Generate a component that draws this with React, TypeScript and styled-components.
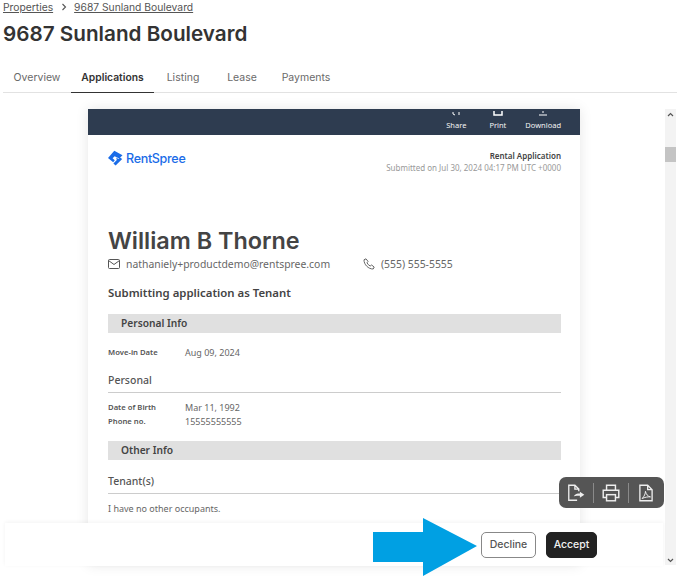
import styled, { createGlobalStyle } from 'styled-components'

const GlobalStyle = createGlobalStyle`
  html, body {
    margin: 0;
    background: #fff;
  }
  * {
    box-sizing: border-box;
  }
`

const Page = styled.div`
  position: relative;
  width: 688px;
  height: 585px;
  overflow: hidden;
  padding: 0 3px;
  font-family: Inter, sans-serif;
  color: #333;
`

const Breadcrumb = styled.nav`
  display: flex;
  align-items: center;
  gap: 7.5px;
  height: 14px;
  font-size: 10.3px;
  color: #555;
  a {
    color: inherit;
    text-decoration: underline;
  }
`

const Title = styled.h1`
  margin: 6px 0 0;
  font-size: 20.7px;
  line-height: 28px;
  font-weight: 600;
  color: #333;
`

const Tabs = styled.div`
  display: flex;
  height: 31px;
  margin-top: 14px;
  width: 674px;
  border-bottom: 1px solid #e2e2e2;
`

const Tab = styled.div<{ $active?: boolean; $width: number }>`
  width: ${p => p.$width}px;
  text-align: center;
  font-size: ${p => (p.$active ? 10.3 : 10.5)}px;
  line-height: 31px;
  height: 31px;
  font-weight: ${p => (p.$active ? 600 : 400)};
  color: ${p => (p.$active ? '#333' : '#6a6a6a')};
  border-bottom: ${p => (p.$active ? '1.5px solid #333' : 'none')};
`

const Viewer = styled.div`
  display: flex;
  height: 456px;
  margin-top: 16px;
`

const Doc = styled.div`
  width: 492px;
  margin-left: 85px;
  height: 100%;
  overflow: hidden;
  box-shadow: 0 0 12px rgba(0, 0, 0, 0.1);
  font-family: 'Noto Sans', sans-serif;
  color: #444;
`

const DocBar = styled.div`
  display: flex;
  justify-content: flex-end;
  gap: 19px;
  height: 26px;
  padding: 0 19px 0 0;
  background: #2e3c50;
`

const BarAction = styled.div<{ $after?: number }>`
  display: flex;
  flex-direction: column;
  align-items: center;
  justify-content: flex-end;
  margin-right: ${p => p.$after ?? 0}px;
  font-size: 7.5px;
  line-height: 10px;
  padding-bottom: 5px;
  color: #f4f4f4;
  svg {
    display: block;
    margin-bottom: 4px;
  }
`

const DocBody = styled.div`
  padding: 0 19px 0 20px;
`

const DocHead = styled.div`
  display: flex;
  justify-content: space-between;
  padding-top: 15px;
`

const Logo = styled.div`
  display: flex;
  align-items: center;
  gap: 3px;
  height: 16px;
  font-family: Inter, sans-serif;
  font-size: 12.5px;
  font-weight: 500;
  letter-spacing: -0.3px;
  color: #1a6ce8;
`

const Meta = styled.div`
  text-align: right;
  font-size: 8px;
  line-height: 12px;
  color: #999;
  strong {
    display: block;
    color: #444;
    font-weight: 600;
  }
`

const Name = styled.h2`
  margin: 52px 0 0;
  font-family: Inter, sans-serif;
  font-size: 23.4px;
  line-height: 30px;
  font-weight: 600;
  color: #444;
`

const Contact = styled.div`
  display: flex;
  align-items: center;
  height: 16px;
  margin-top: 0;
  font-size: 10.4px;
  color: #666;
`

const ContactItem = styled.span<{ $width?: number }>`
  display: flex;
  align-items: center;
  gap: 6px;
  width: ${p => (p.$width ? `${p.$width}px` : 'auto')};
`

const Lead = styled.div`
  margin-top: 13px;
  font-size: 11.4px;
  line-height: 16px;
  font-weight: 600;
  color: #444;
`

const Band = styled.div<{ $top: number }>`
  height: 19px;
  margin-top: ${p => p.$top}px;
  padding-left: 13px;
  background: #e0e0e0;
  font-size: 10.2px;
  line-height: 19px;
  font-weight: 600;
  color: #444;
`

const Row = styled.div<{ $top: number }>`
  display: flex;
  height: 14px;
  margin-top: ${p => p.$top}px;
  align-items: center;
`

const Label = styled.div`
  width: 77px;
  font-size: 7.7px;
  font-weight: 600;
  color: #555;
`

const Value = styled.div`
  font-size: 9px;
  color: #666;
`

const SubHead = styled.div<{ $top: number }>`
  margin-top: ${p => p.$top}px;
  padding-bottom: 4px;
  border-bottom: 1px solid #ccc;
  font-size: 10.5px;
  line-height: 15px;
  font-weight: 500;
  color: #555;
`

const Note = styled.div`
  margin-top: 8px;
  font-size: 9px;
  line-height: 14px;
  color: #666;
`

const Track = styled.div`
  position: relative;
  width: 11px;
  margin-left: 85px;
  background: #f3f3f3;
`

const Thumb = styled.div`
  position: absolute;
  top: 38px;
  left: 0;
  width: 11px;
  height: 15px;
  background: #c4c4c4;
`

const Caret = styled.svg<{ $bottom?: boolean }>`
  position: absolute;
  left: 2px;
  ${p => (p.$bottom ? 'bottom: 2px;' : 'top: 3px;')}
`

const Toolbar = styled.div`
  position: absolute;
  left: 559px;
  top: 477px;
  display: flex;
  align-items: center;
  gap: 7px;
  width: 105px;
  height: 31px;
  padding: 0 7px;
  border-radius: 7px;
  background: #555;
  svg {
    display: block;
    flex: none;
  }
`

const Divider = styled.div`
  width: 1px;
  height: 20px;
  background: #8a8a8a;
`

const Footer = styled.div`
  position: absolute;
  left: 5px;
  top: 523px;
  display: flex;
  justify-content: flex-end;
  align-items: center;
  gap: 10px;
  width: 658px;
  height: 43px;
  padding: 0 66px 0 0;
  background: #fff;
  box-shadow: 0 -1px 4px rgba(0, 0, 0, 0.05);
`

const Btn = styled.button<{ $primary?: boolean }>`
  width: ${p => (p.$primary ? 51 : 55)}px;
  height: 26px;
  padding: 0;
  border-radius: 5px;
  border: 1px solid ${p => (p.$primary ? '#222' : '#888')};
  background: ${p => (p.$primary ? '#222' : '#fff')};
  color: ${p => (p.$primary ? '#f2f2f2' : '#555')};
  font-family: Inter, sans-serif;
  font-size: 10.5px;
  font-weight: 500;
`

const Arrow = styled.svg`
  position: absolute;
  left: 373px;
  top: 518px;
`

function RentSpreeMark() {
  return (
    <svg width="15" height="16" viewBox="0 0 15 16">
      <path d="M0 8 L6.3 0.8 L14.5 5.2 L11.2 8.6 L6.6 6.2 L4.6 8.2 L6.8 10.2 L5.2 12.2 Z" fill="#1a6ce8" />
      <path d="M8.2 7.6 L10.4 8.9 L12 7.4 L14.2 9 L7.6 15.4 L5.4 13.4 L8.8 10 Z" fill="#1a6ce8" />
    </svg>
  )
}

export default function App() {
  return (
    <Page>
      <GlobalStyle />
      <Breadcrumb>
        <a href="#">Properties</a>
        <svg width="6" height="8" viewBox="0 0 6 8" fill="none" stroke="#555" strokeWidth="1.1">
          <path d="M1.5 1 L4.5 4 L1.5 7" />
        </svg>
        <a href="#">9687 Sunland Boulevard</a>
      </Breadcrumb>
      <Title>9687 Sunland Boulevard</Title>
      <Tabs>
        <Tab $width={68}>Overview</Tab>
        <Tab $width={83} $active>Applications</Tab>
        <Tab $width={58}>Listing</Tab>
        <Tab $width={60}>Lease</Tab>
        <Tab $width={68}>Payments</Tab>
      </Tabs>
      <Viewer>
        <Doc>
          <DocBar>
            <BarAction $after={4}>
              <svg width="12" height="4" viewBox="0 0 12 4" fill="none" stroke="#fff" strokeWidth="1">
                <path d="M3 0 L3 2 L5 3 M9 0 L9 3" />
              </svg>
              Share
            </BarAction>
            <BarAction>
              <svg width="12" height="5" viewBox="0 0 12 5" fill="none" stroke="#fff" strokeWidth="1.5">
                <path d="M2 0 L2 4 L10 4 L10 0" />
              </svg>
              Print
            </BarAction>
            <BarAction>
              <svg width="12" height="5" viewBox="0 0 12 5" fill="none" stroke="#fff" strokeWidth="1">
                <path d="M6 0 L6 2 M2 4 L10 4" />
              </svg>
              Download
            </BarAction>
          </DocBar>
          <DocBody>
            <DocHead>
              <Logo>
                <RentSpreeMark />
                RentSpree
              </Logo>
              <Meta>
                <strong>Rental Application</strong>
                Submitted on Jul 30, 2024 04:17 PM UTC +0000
              </Meta>
            </DocHead>
            <Name>William B Thorne</Name>
            <Contact>
              <ContactItem $width={255}>
                <svg width="12" height="10" viewBox="0 0 12 10" fill="none" stroke="#555" strokeWidth="1">
                  <rect x="0.5" y="0.5" width="11" height="9" rx="1" />
                  <path d="M0.5 1.5 L6 5.5 L11.5 1.5" />
                </svg>
                nathaniely+productdemo@rentspree.com
              </ContactItem>
              <ContactItem>
                <svg width="12" height="12" viewBox="0 0 12 12" fill="none" stroke="#666" strokeWidth="1">
                  <path d="M1 1.8 L3 0.8 L5 3.4 L4 4.8 C4.6 6.2 5.8 7.4 7.2 8 L8.6 7 L11.2 9 L10.2 11 C5.5 11.2 0.8 6.5 1 1.8 Z" />
                </svg>
                (555) 555-5555
              </ContactItem>
            </Contact>
            <Lead>Submitting application as Tenant</Lead>
            <Band $top={13}>Personal Info</Band>
            <Row $top={12}>
              <Label>Move-in Date</Label>
              <Value>Aug 09, 2024</Value>
            </Row>
            <SubHead $top={14}>Personal</SubHead>
            <Row $top={7}>
              <Label>Date of Birth</Label>
              <Value>Mar 11, 1992</Value>
            </Row>
            <Row $top={0}>
              <Label>Phone no.</Label>
              <Value>15555555555</Value>
            </Row>
            <Band $top={13}>Other Info</Band>
            <SubHead $top={14}>Tenant(s)</SubHead>
            <Note>I have no other occupants.</Note>
          </DocBody>
        </Doc>
        <Track>
          <Caret width="7" height="5" viewBox="0 0 7 5" fill="none" stroke="#555" strokeWidth="1.2">
            <path d="M1 4 L3.5 1.5 L6 4" />
          </Caret>
          <Thumb />
          <Caret $bottom width="7" height="5" viewBox="0 0 7 5" fill="none" stroke="#555" strokeWidth="1.2">
            <path d="M1 1 L3.5 3.5 L6 1" />
          </Caret>
        </Track>
      </Viewer>
      <Toolbar>
        <svg width="20" height="20" viewBox="0 0 18 18" fill="none" stroke="#eee" strokeWidth="1.2">
          <path d="M10 15.5 H2.5 V2 H8 L11.5 5.5 V7.5 M8 2 V5.5 H11.5" />
          <path d="M7 12 C8 10 10 9.5 12.5 9.5 V7.8 L16.5 10.5 L12.5 13.2 V11.5 C10.5 11.5 9 11.5 7 12 Z" fill="#eee" stroke="none" />
        </svg>
        <Divider />
        <svg width="20" height="20" viewBox="0 0 18 18" fill="none" stroke="#eee" strokeWidth="1.3">
          <path d="M5 6 V2 H13 V6 M5 13 H2 V6.5 H16 V13 H13" />
          <rect x="5" y="10.5" width="8" height="5.5" />
        </svg>
        <Divider />
        <svg width="20" height="20" viewBox="0 0 18 18" fill="none" stroke="#eee" strokeWidth="1.2">
          <path d="M3.5 16 V2 H10.5 L14.5 6 V16 Z M10.5 2 V6 H14.5" />
          <path d="M5.5 14 C7.5 12 8.5 9.5 8.5 7.5 C9 10 10.5 12 13 12.5 C10.5 12.3 8 12.8 5.5 14 Z" strokeWidth="0.9" />
        </svg>
      </Toolbar>
      <Footer>
        <Btn>Decline</Btn>
        <Btn $primary>Accept</Btn>
      </Footer>
      <Arrow width="104" height="58" viewBox="0 0 104 58">
        <path d="M0 14 H50 V0 L104 28 L50 58 V44 H0 Z" fill="#00a0e3" />
      </Arrow>
    </Page>
  )
}
